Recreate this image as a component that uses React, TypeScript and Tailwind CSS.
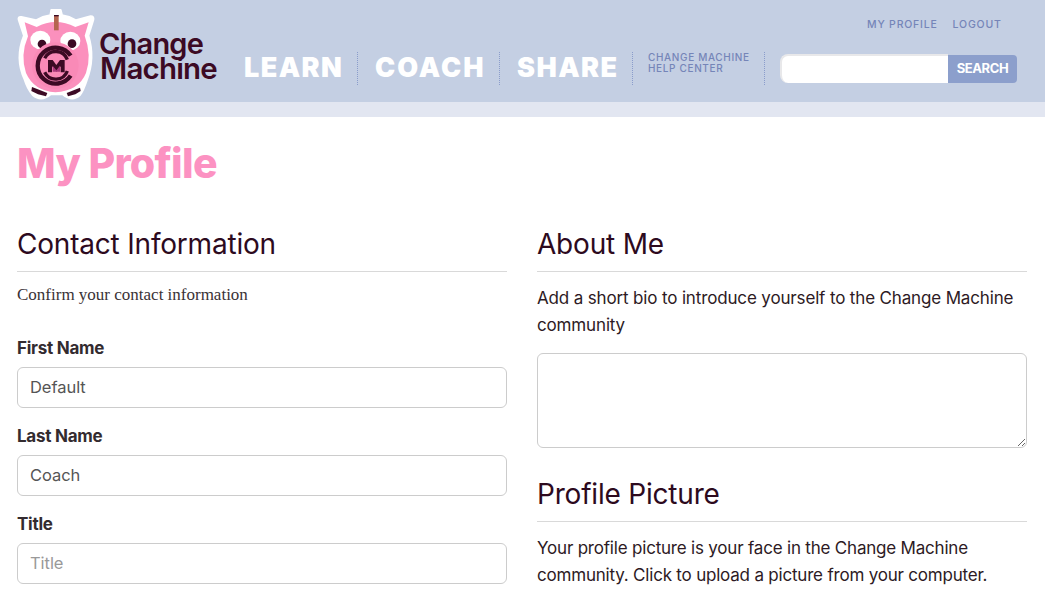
import React from "react";

function Logo() {
  return (
    <svg width="90" height="100" viewBox="0 0 270 300" className="shrink-0">
      <path d="M28 36 L72 46 Q92 34 115 31 L118 15 L146 15 L150 31 Q172 34 192 46 L236 34 Q246 34 244 44 L229 92 Q250 160 224 226 Q214 256 204 270 Q180 292 152 268 L116 268 Q88 292 62 270 Q46 250 38 224 Q8 160 36 92 L20 44 Q18 34 28 36 Z" fill="#ffffff" stroke="#ffffff" strokeWidth="6" strokeLinejoin="round" />
      <path d="M38 52 L74 66 Q130 36 190 66 L230 52 L218 92 Q240 150 222 204 Q200 258 130 262 Q66 258 42 204 Q24 150 48 94 Z" fill="#fb90bd" />
      <rect x="126" y="30" width="14" height="46" fill="#b4654f" />
      <rect x="126" y="30" width="14" height="4" fill="#3c0a24" />
      <ellipse cx="85" cy="105" rx="30" ry="28" fill="#ffffff" />
      <ellipse cx="175" cy="108" rx="30" ry="28" fill="#ffffff" />
      <circle cx="90" cy="117" r="13" fill="#3c0a24" />
      <circle cx="180" cy="116" r="13" fill="#3c0a24" />
      <circle cx="130" cy="182" r="70" fill="#f98ab7" />
      <path d="M60 246 L106 264 L102 274 L78 268 L58 258 Z" fill="#3c0a24" />
      <path d="M204 248 L164 264 L168 274 L190 268 L206 258 Z" fill="#3c0a24" />
      <path d="M176 152 A54 54 0 1 0 176 212" fill="none" stroke="#3c0a24" strokeWidth="13" />
      <path d="M98 160 A37 37 0 0 1 166 164 M166 198 A37 37 0 0 1 98 202" fill="none" stroke="#3c0a24" strokeWidth="10" />
      <path d="M108 202 L108 165 L122 165 L133 180 L144 165 L158 165 L158 202 L146 202 L146 184 L133 200 L120 184 L120 202 Z" fill="#3c0a24" />
      <path d="M122 182 L133 196 L144 182 L144 200 L122 200 Z" fill="#a8387a" />
    </svg>
  );
}

function Field({ label, value, placeholder }: { label: string; value?: string; placeholder?: string }) {
  return (
    <div className="mb-[16px]">
      <label className="block text-[17px] leading-[24px] font-bold text-[#332b2f] mb-[7px] tracking-[-0.25px]">{label}</label>
      <input
        readOnly
        value={value ?? ""}
        placeholder={placeholder}
        className="block w-full h-[41px] px-[12px] pb-[2px] rounded-[6px] border border-[#cccccc] text-[16.5px] tracking-[-0.05px] text-[#555555] placeholder:text-[#999999] bg-white outline-none"
      />
    </div>
  );
}

function Heading({ children }: { children: React.ReactNode }) {
  return (
    <h2 className="text-[28px] leading-[36px] text-[#2d0a1e] pb-[9px] border-b border-[#d9d9d9] tracking-[-0.2px]">{children}</h2>
  );
}

export default function App() {
  return (
    <div className="w-[1045px] h-[598px] overflow-hidden bg-white font-['Inter','Lato',sans-serif]">
      <header className="h-[117px] bg-[#c4cfe3] border-b-[15px] border-[#e2e6f1] flex">
        <div className="pl-[12px] pt-[5px] w-[100px]">
          <Logo />
        </div>
        <div className="pt-[32px] text-[#3c0a24] font-semibold text-[29.5px] leading-[24px] tracking-[-0.8px] w-[144px]">
          <div className="-ml-[1px] text-[29px]">Change</div>
          <div>Machine</div>
        </div>
        <nav className="flex items-start pt-[52px] text-white font-black text-[27px] leading-[32px] tracking-[1.45px]">
          <span className="w-[114px] h-[33px] border-r border-dotted border-[#8a9ccb]">LEARN</span>
          <span className="w-[142px] h-[33px] pl-[17px] border-r border-dotted border-[#8a9ccb] tracking-[2px]">COACH</span>
          <span className="w-[133px] h-[33px] pl-[17px] border-r border-dotted border-[#8a9ccb]">SHARE</span>
        </nav>
        <div className="mt-[52px] w-[132px] h-[33px] pl-[15px] border-r border-dotted border-[#8a9ccb] text-[#7585b8] text-[10px] leading-[11px] tracking-[0.65px] font-medium">
          <div>CHANGE MACHINE</div>
          <div>HELP CENTER</div>
        </div>
        <div className="pl-[15px] flex flex-col">
          <div className="h-[54px] pt-[18px] pl-[87px] flex gap-[15px] text-[#7585b8] text-[10.5px] leading-[14px] tracking-[0.8px] font-medium whitespace-nowrap">
            <span>MY PROFILE</span>
            <span>LOGOUT</span>
          </div>
          <div className="flex w-[237px] h-[29px]">
            <div className="w-[168px] bg-white rounded-l-[8px] border-t-2 border-l-2 border-[#e8e8ea]" />
            <div className="flex-1 bg-[#8c9fcc] mt-[1px] rounded-r-[4px] text-white text-[13px] font-bold tracking-[-0.4px] leading-[27px] text-center">SEARCH</div>
          </div>
        </div>
      </header>

      <main className="px-[17px]">
        <h1 className="pt-[18px] text-[41px] leading-[56px] font-extrabold tracking-[-0.7px] text-[#fc92c2]">My Profile</h1>
        <div className="mt-[35px] grid grid-cols-[490px_490px] gap-x-[30px]">
          <section>
            <Heading>Contact Information</Heading>
            <p className="mt-[11px] mb-[29px] font-['Liberation_Serif',serif] text-[17px] leading-[24px] text-[#3a3236]">Confirm your contact information</p>
            <Field label="First Name" value="Default" />
            <Field label="Last Name" value="Coach" />
            <Field label="Title" placeholder="Title" />
          </section>
          <section>
            <Heading>About Me</Heading>
            <p className="mt-[13px] text-[17px] leading-[27px] tracking-[-0.15px] text-[#2d1a24]">
              Add a short bio to introduce yourself to the Change Machine community
            </p>
            <textarea
              readOnly
              className="block mt-[14px] w-full h-[95px] rounded-[6px] border border-[#cccccc] bg-white outline-none"
            />
            <div className="mt-[28px]">
              <Heading>Profile Picture</Heading>
            </div>
            <p className="mt-[13px] text-[17px] leading-[27px] tracking-[-0.2px] text-[#2d1a24]">
              Your profile picture is your face in the Change Machine community. Click to upload a picture from your computer.
            </p>
          </section>
        </div>
      </main>
    </div>
  );
}
